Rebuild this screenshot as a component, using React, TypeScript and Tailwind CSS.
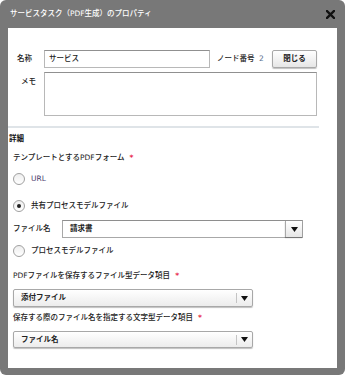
import React from 'react';

const font = { fontFamily: '"DejaVu Sans", "Noto Sans CJK JP", sans-serif' };

function Radio({ checked, label, labelClass = '' }: { checked?: boolean; label: string; labelClass?: string }) {
  return (
    <div className="flex items-center h-[12px]">
      <span className="w-[12px] h-[12px] rounded-full border border-[#a0a0a0] bg-gradient-to-b from-[#eeeeee] to-white flex items-center justify-center">
        {checked && <span className="w-[4px] h-[4px] rounded-full bg-[#222]" />}
      </span>
      <span className={`ml-[6px] text-[7.5px] leading-none whitespace-nowrap ${labelClass}`}>{label}</span>
    </div>
  );
}

function Arrow() {
  return (
    <svg width="7" height="5" viewBox="0 0 7 5">
      <path d="M0 0 H7 L3.5 5 Z" fill="#111" />
    </svg>
  );
}

function Select({ value, h }: { value: string; h: string }) {
  return (
    <div className={`w-[240px] ${h} flex items-center border border-[#a8a8a8] rounded-[2px] bg-gradient-to-b from-white to-[#ececec] shadow-[0_1px_1px_rgba(0,0,0,0.25)]`}>
      <span className="flex-1 pl-[7px] text-[7.5px] leading-none font-bold text-[#222]">{value}</span>
      <span className="w-px h-[10px] bg-[#c4c4c4]" />
      <span className="w-[15px] flex justify-center">
        <Arrow />
      </span>
    </div>
  );
}

function Label({ text, req }: { text: string; req?: boolean }) {
  return (
    <div className="h-[12px] flex items-center text-[7.5px] leading-none whitespace-nowrap">
      {text}
      {req && <span className="ml-[5px] text-[#e8294a] font-bold">*</span>}
    </div>
  );
}

export default function App() {
  return (
    <div className="w-[345px] h-[377px] bg-white text-[#222] font-medium" style={font}>
      <div className="w-[345px] h-[375px] bg-[#787878] rounded-[6px] px-[8px] pb-[7px] flex flex-col">
        <div className="h-[28px] flex items-center justify-between pl-[2px] pr-[2px] text-white text-[7.5px] leading-none">
          <span>サービスタスク（PDF生成）のプロパティ</span>
          <svg width="9" height="9" viewBox="0 0 9 9">
            <path d="M1 1 L8 8 M8 1 L1 8" stroke="#111" strokeWidth="2.4" strokeLinecap="square" />
          </svg>
        </div>
        <div className="flex-1 bg-white">
          <div className="pt-[22px] pl-[9px] pr-[20px]">
            <div className="flex items-center h-[18px]">
              <span className="w-[27px] text-[7.5px] leading-none">名称</span>
              <div className="w-[166px] h-[18px] border border-[#b8b8b8] border-t-[#909090] flex items-center pl-[4px] text-[7.5px] leading-none">サービス</div>
              <span className="ml-[7px] text-[7.5px] leading-none whitespace-nowrap">
                ノード番号 <span className="ml-[2px] text-[#5a6f8e]">2</span>
              </span>
              <button className="ml-auto w-[45px] h-[18px] border border-[#a8a8a8] rounded-[2px] bg-gradient-to-b from-white to-[#e6e6e6] text-[7.5px] font-bold text-[#222] shadow-[0_1px_1px_rgba(0,0,0,0.25)] leading-none">閉じる</button>
            </div>
            <div className="flex mt-[4px]">
              <span className="w-[27px] text-[7.5px] leading-none pt-[6px] pl-[4px]">メモ</span>
              <div className="flex-1 h-[44px] border border-[#b8b8b8] border-t-[#909090]" />
            </div>
          </div>
          <div className="mt-[10px] w-[311px] h-[2px] bg-[#dfe4e8]" />
          <div className="pl-[1px] mt-[5px] h-[12px] flex items-center text-[7.5px] leading-none font-bold text-[#111]">詳細</div>
          <div className="pl-[5px]">
            <div className="mt-[7px]">
              <Label text="テンプレートとするPDFフォーム" req />
            </div>
            <div className="mt-[9px]">
              <Radio label="URL" labelClass="text-[#4b3d6e]" />
            </div>
            <div className="mt-[15px]">
              <Radio checked label="共有プロセスモデルファイル" />
            </div>
            <div className="mt-[8px] flex items-center h-[18px]">
              <span className="w-[49px] text-[7.5px] leading-none whitespace-nowrap">ファイル名</span>
              <div className="w-[241px] h-[18px] flex border border-[#a8a8a8] border-t-[#8e8e8e]">
                <span className="flex-1 pl-[7px] text-[7.5px] leading-none font-bold text-[#222] flex items-center">請求書</span>
                <span className="w-[17px] border-l border-[#a8a8a8] bg-gradient-to-b from-white to-[#e6e6e6] flex items-center justify-center shadow-[0_1px_1px_rgba(0,0,0,0.3)]">
                  <Arrow />
                </span>
              </div>
            </div>
            <div className="mt-[7px]">
              <Radio label="プロセスモデルファイル" />
            </div>
            <div className="mt-[13px]">
              <Label text="PDFファイルを保存するファイル型データ項目" req />
            </div>
            <div className="mt-[7px]">
              <Select value="添付ファイル" h="h-[18px]" />
            </div>
            <div className="mt-[5px]">
              <Label text="保存する際のファイル名を指定する文字型データ項目" req />
            </div>
            <div className="mt-[7px]">
              <Select value="ファイル名" h="h-[17px]" />
            </div>
          </div>
        </div>
      </div>
    </div>
  );
}
